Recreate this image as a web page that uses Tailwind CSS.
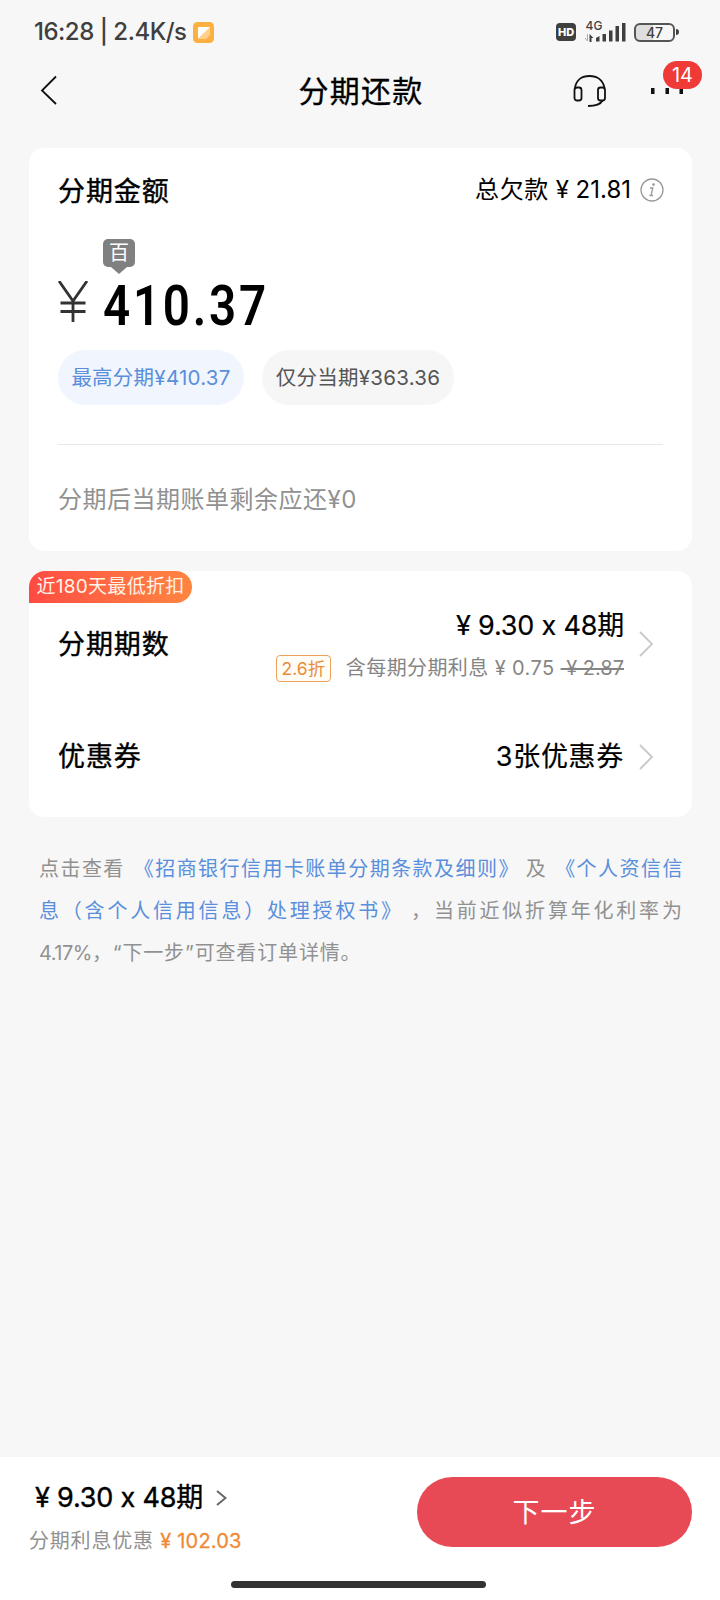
<!DOCTYPE html>
<html lang="zh-CN">
<head>
<meta charset="utf-8">
<title>分期还款</title>
<script src="https://cdn.jsdelivr.net/npm/@tailwindcss/browser@4"></script>
</head>
<body class="bg-[#f7f7f7]">
<div class="w-[720px] h-[1600px] flex flex-col overflow-hidden text-black whitespace-nowrap font-['Inter','Noto_Sans_CJK_SC',sans-serif] [font-feature-settings:'calt'_0]">

  <!-- status bar -->
  <div class="h-16 flex items-center pl-[34px] pr-[41px] text-[#3f3f3f]">
    <span class="w-[153px] text-[24px] leading-8 font-medium tracking-[-0.500px]">16:28 | 2.4K/s</span>
    <svg class="ml-[6px]" width="21" height="21" viewBox="0 0 21 21"><rect width="21" height="21" rx="4.5" fill="#fcb040"/><path d="M5 5h12v8l-4 4H5z" fill="#fdd08b"/><path d="M5 5h12L5 16.500z" fill="#fff"/></svg>
    <div class="ml-auto flex items-center">
      <span class="w-5 h-[18px] rounded-[4px] bg-[#3f3f3f] text-white text-[11px] leading-[18px] font-extrabold text-center">HD</span>
      <svg class="ml-[8px] overflow-visible" width="42" height="24" viewBox="0 0 42 24">
        <text x="1.500" y="10" font-size="12" font-weight="500" fill="#3f3f3f" font-family="Inter">4G</text>
        <g fill="#3f3f3f"><path d="M12 18l3.500-2v5.500H12zM18.500 14h3.500v7.500h-3.500zM25 10.500h3.500v11H25zM31.500 6h3.500v15.500h-3.500zM38 3h3.500v18.500H38z"/><path d="M5.500 14l4 4H7.500v4H5.500z"/></g>
        <path d="M3.500 14v7L1 18" fill="none" stroke="#aaa"/>
      </svg>
      <div class="ml-2 w-[41px] h-[19px] rounded-[6px] border-2 border-[#555] bg-linear-to-r from-[#dedede] from-45% to-[#f7f7f7] to-45% text-[14px] leading-[15px] font-medium text-center">47</div>
      <span class="ml-px w-[3px] h-[6px] rounded-r bg-[#3f3f3f]"></span>
    </div>
  </div>

  <!-- title bar -->
  <div class="h-[53px] grid grid-cols-[1fr_auto_1fr] items-center pl-10 pr-[36px]">
    <svg class="-mt-px" width="18" height="30" viewBox="0 0 18 30"><path d="M16 1.500L2 15.500l14 13.500" fill="none" stroke="#111" stroke-width="1.800"/></svg>
    <h1 class="-ml-px mr-px text-[30px] leading-[44px] tracking-[1.200px] [-webkit-text-stroke:0.3px]">分期还款</h1>
    <div class="flex items-center justify-end">
      <svg width="34" height="34" viewBox="0 0 34 34" fill="none" stroke="#111" stroke-width="1.800"><path d="M2 14C3 6 9 2 16.500 2S30 6 31.500 14"/><rect x="1.500" y="13.500" width="7" height="13" rx="2.500"/><rect x="25" y="13.500" width="7" height="13" rx="2.500"/><path d="M29.500 26.500c-2 4-6 5.500-14.500 5.500"/></svg>
      <div class="relative ml-[44px] w-[33px] h-[6px]">
        <svg width="33" height="6" viewBox="0 0 33 6"><path d="M0 0h3.500v6H0zM14.500 0H18v6h-3.500zM28.500 0H32v6h-3.500z" fill="#111"/></svg>
        <span class="absolute left-[12px] -top-[27px] w-[39px] h-[28px] rounded-full bg-[#ef3a38] text-white text-[20px] leading-[28px] text-center">14</span>
      </div>
    </div>
  </div>

  <!-- amount card -->
  <section class="mt-[31px] ml-[29px] mr-[28px] h-[403px] rounded-[15px] bg-white px-[29px]">
    <div class="h-[84px] flex items-center justify-between">
      <h2 class="pt-[4px] text-[27px] leading-10 tracking-[0.900px] [-webkit-text-stroke:0.4px]">分期金额</h2>
      <div class="-mr-px flex items-center text-[24px] leading-9">
        <span><span class="tracking-[0.600px]">总欠款</span> ¥ 21.81</span>
        <svg class="ml-[9px] -mt-px" width="24" height="24" viewBox="0 0 24 24" fill="none" stroke="#999" stroke-width="1.300"><circle cx="12" cy="12" r="11"/><path d="M10 10h2.800l-1.800 7.500h2M9.500 17.500h3"/><circle cx="13.500" cy="6.500" r=".7" fill="#999"/></svg>
      </div>
    </div>
    <div class="h-[118px] pt-[7px]">
      <div class="ml-[45px] w-8 flex flex-col items-center">
        <span class="w-8 h-7 rounded-[5px] bg-[#808080] text-white text-[20px] leading-[29px] text-center">百</span>
        <svg width="16" height="7" viewBox="0 0 16 7"><path d="M0 0h16L8 7z" fill="#808080"/></svg>
      </div>
      <div class="flex items-center h-[62px]">
        <svg class="-mt-[8px]" width="30" height="41" viewBox="0 0 30 41" fill="none" stroke="#333" stroke-width="2.800"><path d="M1 0l14 20L29 0M15 20v21M2.500 22h25M2.500 30.500h25"/></svg>
        <span class="ml-[15px] mt-px origin-left scale-x-[0.850] text-[56px] leading-[62px] font-semibold tracking-[3.200px] font-['Roboto']">410.37</span>
      </div>
    </div>
    <div class="flex gap-[18px]">
      <span class="w-[186px] h-[55px] rounded-full bg-[#f1f5fd] text-[#5a8fdc] text-[20.500px] leading-[55px] tracking-[0.250px] text-center">最高分期¥410.37</span>
      <span class="w-[192px] h-[55px] rounded-full bg-[#f6f6f6] text-[#555] text-[20.500px] leading-[55px] tracking-[0.250px] text-center">仅分当期¥363.36</span>
    </div>
    <div class="mt-[39px] border-t border-[#e8e8e8] pt-[35px] text-[24px] leading-10 tracking-[0.500px] text-[#919191]">分期后当期账单剩余应还¥0</div>
  </section>

  <!-- instalment and coupon card -->
  <section class="mt-5 ml-[29px] mr-[28px] h-[246px] rounded-[15px] bg-white">
    <div class="w-[163px] h-8 rounded-t-[16px] rounded-br-[16px] bg-linear-to-r from-[#ff4a43] to-[#ff8540] text-[#fff3e8] text-[19px] leading-8 tracking-[0.300px] text-center">近180天最低折扣</div>
    <div class="flex h-[84px] pl-[29px] pr-[39px]">
      <h2 class="pt-[22px] text-[27px] leading-10 tracking-[0.900px] [-webkit-text-stroke:0.4px]">分期期数</h2>
      <div class="ml-auto flex flex-col items-end">
        <div class="pt-[3px] text-[27px] leading-10 tracking-[-0.200px] [-webkit-text-stroke:0.2px]">¥ 9.30 x 48期</div>
        <div class="flex items-center text-[20px] leading-[28px] mt-[7px] text-[#858585]">
          <span class="mr-[15px] w-[55px] h-[27px] mt-[2px] rounded border border-[#eda25e] bg-[#fffdf6] text-[#e98c3e] text-[17.500px] leading-[26px] text-center">2.6折</span>
          <span class="tracking-[0.400px]">含每期分期利息 ¥ 0.75</span>
          <s class="ml-[6px]">&nbsp;¥ 2.87</s>
        </div>
      </div>
      <svg class="ml-[15px] mt-[28px]" width="14" height="26" viewBox="0 0 14 26"><path d="M1 1l12 12L1 25" fill="none" stroke="#c8c8c8" stroke-width="1.800"/></svg>
    </div>
    <div class="h-[130px] pt-[10px] flex items-center pl-[29px] pr-[39px]">
      <h2 class="text-[27px] leading-10 tracking-[0.900px] [-webkit-text-stroke:0.4px]">优惠券</h2>
      <span class="ml-auto text-[27px] leading-10 tracking-[0.700px] [-webkit-text-stroke:0.2px]">3张优惠券</span>
      <svg class="ml-[15px]" width="14" height="26" viewBox="0 0 14 26"><path d="M1 1l12 12L1 25" fill="none" stroke="#c8c8c8" stroke-width="1.800"/></svg>
    </div>
  </section>

  <!-- terms -->
  <div class="mt-[30px] ml-[39px] text-[20px] leading-[42px] text-[#919191] font-['Noto_Sans_CJK_SC']">
    <p class="tracking-[1.450px]">点击查看<span class="ml-[3px] text-[#5a8fdc]"> 《招商银行信用卡账单分期条款及细则》</span> 及<span class="ml-[2px] text-[#5a8fdc]"> 《个人资信信</span></p>
    <p class="tracking-[2.800px]"><span class="text-[#5a8fdc]">息（含个人信用信息）处理授权书》</span> ，当前近似折算年化利率为</p>
    <p class="tracking-[0.850px]"><span class="font-['Inter'] tracking-[-0.500px]">4.17%</span>，<span class="font-['Inter']">“</span>下一步<span class="font-['Inter']">”</span>可查看订单详情。</p>
  </div>

  <!-- action bar -->
  <footer class="mt-auto h-[143px] bg-white flex flex-col">
    <div class="flex justify-between pt-5 pl-[29px] pr-[28px]">
      <div>
        <div class="flex items-center pt-px pl-[6px] text-[27px] leading-10 tracking-[-0.200px] [-webkit-text-stroke:0.4px]">¥ 9.30 x 48期
          <svg class="ml-[13px]" width="11" height="16" viewBox="0 0 11 16"><path d="M1 1l8.500 7L1 15" fill="none" stroke="#666" stroke-width="2"/></svg>
        </div>
        <div class="mt-[8px] text-[20px] leading-[30px] tracking-[0.800px] text-[#919191]">分期利息优惠 <span class="text-[#f08a35] tracking-[0.200px] [-webkit-text-stroke:0.3px]">¥ 102.03</span></div>
      </div>
      <button class="w-[275px] h-[70px] rounded-full bg-[#e84a55] text-white text-[27px] leading-[71px] tracking-[1px]">下一步</button>
    </div>
    <div class="mt-auto mb-3 ml-[231px] w-[255px] h-[7px] rounded-full bg-[#333]"></div>
  </footer>
</div>
</body>
</html>
